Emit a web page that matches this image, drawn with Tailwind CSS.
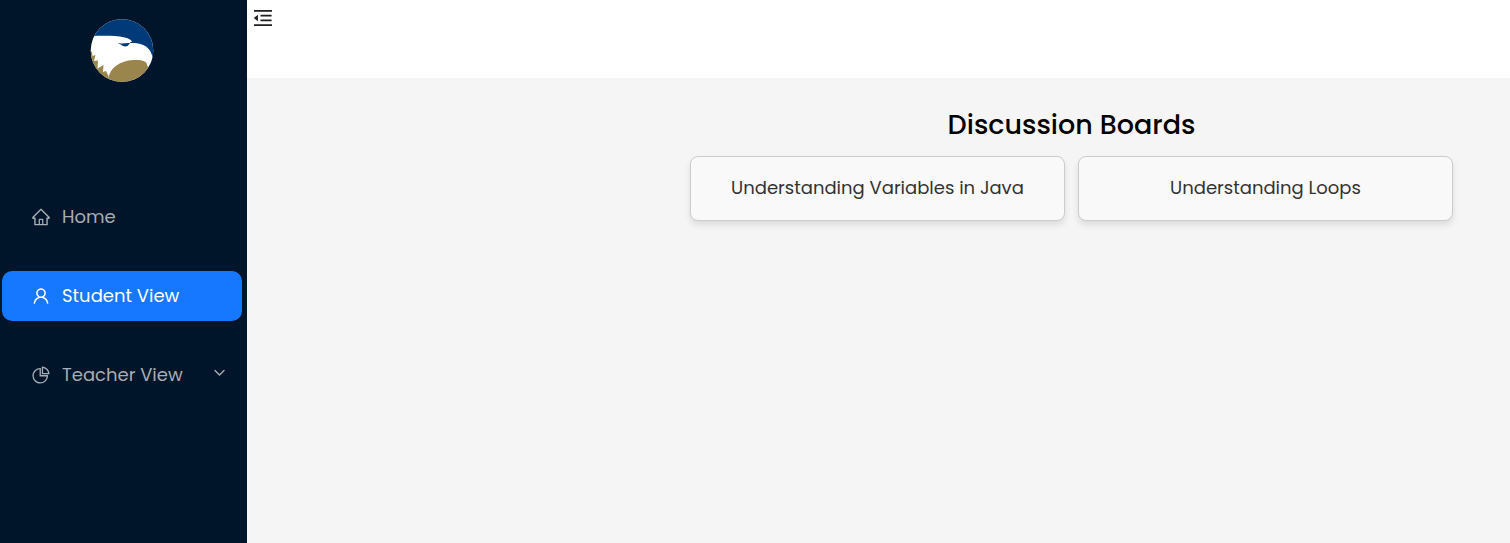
<!DOCTYPE html>
<html lang="en">
<head>
<meta charset="utf-8">
<meta name="viewport" content="width=device-width, initial-scale=1">
<title>Discussion Boards</title>
<script src="https://cdn.jsdelivr.net/npm/@tailwindcss/browser@4"></script>
</head>
<body class="flex min-h-screen bg-[#f5f5f5] font-[Poppins,Inter,sans-serif]">
  <aside class="w-[247px] shrink-0 bg-[#001529] pt-[19px]">
    <a href="#" aria-label="Dashboard" class="ml-[90px] block size-16">
      <svg viewBox="0 0 64 64" class="size-16" aria-hidden="true">
        <defs><clipPath id="disc"><circle cx="32" cy="31.5" r="31.3"/></clipPath></defs>
        <g clip-path="url(#disc)">
          <rect width="64" height="64" fill="#fff"/>
          <path d="M0 0h64v39h-1.500C62 33 58 27.500 52 25.500C47 24 43 24 39 24.200L42 22.500C40 17.500 26 16 0 17z" fill="#003a78"/>
          <path d="M27.500 24C32 25 36 23.800 40 24.200L37.500 27C35 28 32 27 31 25.500z" fill="#003a78"/>
          <path d="M18 64C18 48 31 42 43 41C52 40.500 57 42 57 46L58 48V64z" fill="#9a864d"/>
          <path d="M0 32l2 1 .5 4 3-1-1.500 6 4-.5-.5 8 6-3.500-.5 7 3-1 2.500 5V64H0z" fill="#9a864d"/>
        </g>
      </svg>
    </a>
    <nav aria-label="Main" class="mt-[109px] ml-[2px] flex w-60 flex-col gap-[29px] text-lg text-[#a6adb4]">
      <a href="#" class="flex h-[50px] items-center rounded-[10px] pl-[29px]">
        <svg class="mr-[11px] size-5" viewBox="0 0 1024 1024" fill="currentColor" aria-hidden="true"><path d="M946.5 505L560.1 118.8l-25.9-25.9a31.5 31.5 0 00-44.4 0L77.5 505a63.9 63.9 0 00-18.8 46c.4 35.2 29.7 63.3 64.9 63.3h42.5V940h691.8V614.3h43.4c17.1 0 33.2-6.7 45.3-18.8a63.6 63.6 0 0018.7-45.3c0-17-6.7-33.1-18.8-45.2zM568 868H456V664h112v204zm217.900-325.700V868H632V640c0-22.100-17.900-40-40-40H432c-22.100 0-40 17.900-40 40v228H238.100V542.300h-96l370-369.700 23.100 23.100L882 542.300h-96.100z"/></svg>
        Home
      </a>
      <a href="#" aria-current="page" class="flex h-[50px] items-center rounded-[10px] bg-[#1677ff] pl-[29px] text-white">
        <svg class="mr-[11px] size-5" viewBox="0 0 1024 1024" fill="currentColor" aria-hidden="true"><path d="M858.5 763.6a374 374 0 00-80.6-119.5 375.63 375.63 0 00-119.5-80.6c-.4-.2-.8-.3-1.200-.5C719.5 518 760 444.7 760 362c0-137-111-248-248-248S264 225 264 362c0 82.700 40.500 156 102.800 201.100-.4.2-.8.3-1.200.5-44.800 18.900-85 46-119.500 80.600a375.63 375.63 0 00-80.6 119.5A371.7 371.7 0 00136 901.8a8 8 0 008 8.200h60c4.400 0 7.900-3.500 8-7.800 2-77.200 33-149.500 87.800-204.300 56.700-56.700 132-87.900 212.200-87.900s155.500 31.200 212.200 87.900C779 752.7 810 825 812 902.2c.1 4.400 3.600 7.800 8 7.800h60a8 8 0 008-8.200c-1-47.800-10.900-94.300-29.500-138.200zM512 534c-45.900 0-89.100-17.900-121.600-50.400S340 407.9 340 362c0-45.900 17.900-89.100 50.400-121.600S466.1 190 512 190s89.100 17.900 121.600 50.400S684 316.1 684 362c0 45.900-17.900 89.100-50.400 121.600S557.9 534 512 534z"/></svg>
        Student View
      </a>
      <button type="button" aria-expanded="false" class="flex h-[50px] items-center rounded-[10px] pr-4 pl-[29px] text-left">
        <svg class="mr-[11px] size-5" viewBox="0 0 1024 1024" fill="currentColor" aria-hidden="true"><path d="M864 518H506V160c0-4.400-3.600-8-8-8h-26a398.46 398.46 0 00-282.800 117.100 398.19 398.19 0 00-85.700 127.100A397.61 397.61 0 0072 552a398.46 398.46 0 00117.100 282.800c36.700 36.700 79.500 65.600 127.100 85.700A397.61 397.61 0 00472 952a398.46 398.46 0 00282.800-117.100c36.700-36.700 65.600-79.500 85.700-127.100A397.61 397.61 0 00872 552v-26c0-4.400-3.600-8-8-8zM705.7 787.8A331.59 331.59 0 01470.4 884c-88.100-.4-170.900-34.900-233.200-97.200C174.5 724.1 140 640.7 140 552c0-88.700 34.500-172.100 97.200-234.800 54.600-54.600 124.900-87.900 200.800-95.500V586h364.300c-7.700 76.300-41.300 147-96.600 201.800zM952 462.4l-2.600-28.200c-8.500-92.100-49.400-179-115.200-244.600A399.4 399.4 0 00589 74.6L560.7 72c-4.700-.4-8.700 3.200-8.700 7.900V464c0 4.400 3.600 8 8 8l384-1c4.700 0 8.400-4 8-8.600zm-332.200-58.200V147.600a332.24 332.24 0 01166.400 89.800c45.700 45.600 77 103.600 90 166.100l-256.400.7z"/></svg>
        Teacher View
        <svg class="mb-1 ml-auto h-2 w-3" viewBox="0 0 12 8" fill="none" stroke="currentColor" stroke-width="1.4" stroke-linecap="round" aria-hidden="true"><path d="M1 1.500L5.500 6 10 1.500"/></svg>
      </button>
    </nav>
  </aside>
  <div class="min-w-0 flex-1">
    <header class="h-[78px] bg-white px-[7px] pt-2.5">
      <button type="button" aria-label="Collapse menu" class="block text-[#1f1f1f]">
        <svg class="h-4 w-[18px]" viewBox="112 156 800 712" fill="currentColor" aria-hidden="true"><path d="M408 442h480c4.400 0 8-3.600 8-8v-56c0-4.400-3.600-8-8-8H408c-4.400 0-8 3.600-8 8v56c0 4.400 3.600 8 8 8zm-8 204c0 4.400 3.600 8 8 8h480c4.400 0 8-3.600 8-8v-56c0-4.400-3.600-8-8-8H408c-4.400 0-8 3.600-8 8v56zm504-486H120c-4.400 0-8 3.600-8 8v56c0 4.400 3.600 8 8 8h784c4.400 0 8-3.600 8-8v-56c0-4.400-3.600-8-8-8zm0 632H120c-4.400 0-8 3.600-8 8v56c0 4.400 3.600 8 8 8h784c4.400 0 8-3.600 8-8v-56c0-4.400-3.600-8-8-8zM115.4 518.9L271.7 642c5.800 4.600 14.400.5 14.400-6.900V388.900c0-7.400-8.500-11.500-14.400-6.900L115.400 505.1a8.740 8.740 0 000 13.800z"/></svg>
      </button>
    </header>
    <main class="pt-[26px] pr-[57px] pl-[443px]">
      <h1 class="text-center text-[27px] leading-[42px] font-medium text-black">Discussion Boards</h1>
      <div class="mt-[10px] grid grid-cols-2 gap-[13px] text-lg text-[#333]">
        <button type="button" class="h-[65px] rounded-lg border border-[#ccc] bg-[#f9f9f9] pb-0.5 shadow-[0_4px_6px_rgba(0,0,0,0.1)]">Understanding Variables in Java</button>
        <button type="button" class="h-[65px] rounded-lg border border-[#ccc] bg-[#f9f9f9] pb-0.5 shadow-[0_4px_6px_rgba(0,0,0,0.1)]">Understanding Loops</button>
      </div>
    </main>
  </div>
</body>
</html>
